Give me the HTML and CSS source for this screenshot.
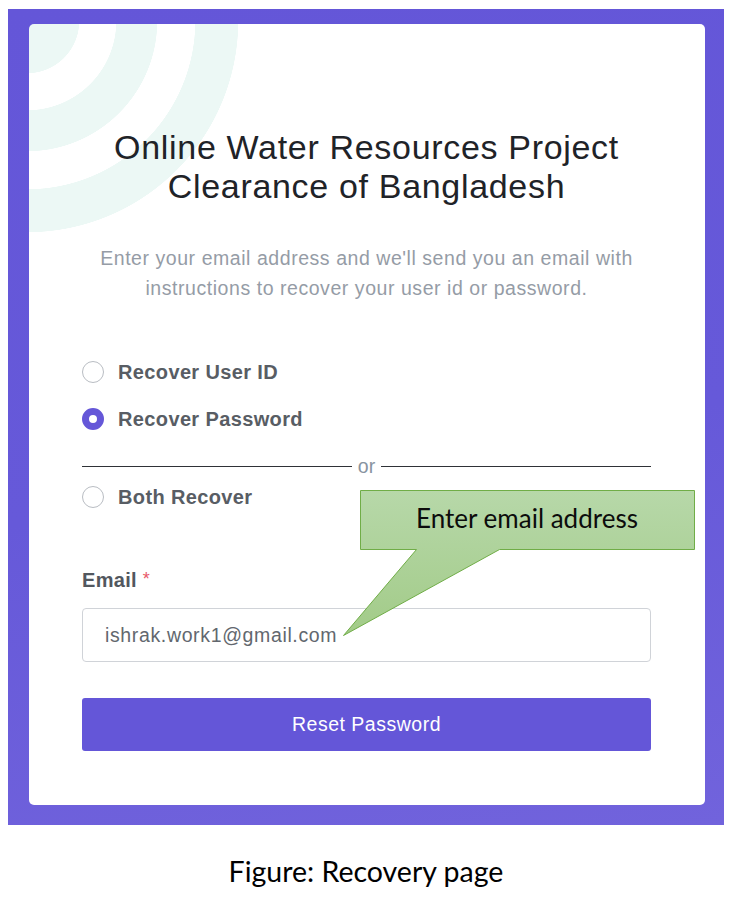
FILE: index.html
```html
<!DOCTYPE html>
<html lang="en">
<head>
<meta charset="utf-8">
<title>Recovery page</title>
<link rel="stylesheet" href="styles.css">
</head>
<body>
<div class="page">
  <div class="frame">
    <div class="card">
      <h1 class="title">Online Water Resources Project<br>Clearance of Bangladesh</h1>
      <p class="lead">Enter your email address and we'll send you an email with<br>instructions to recover your user id or password.</p>
      <div class="options">
        <div class="opt opt-first"><span class="radio"></span><span class="opt-text">Recover User ID</span></div>
        <div class="opt opt-second"><span class="radio radio-on"></span><span class="opt-text">Recover Password</span></div>
        <div class="divider"><span class="rule"></span><span class="or">or</span><span class="rule"></span></div>
        <div class="opt opt-third"><span class="radio"></span><span class="opt-text">Both Recover</span></div>
      </div>
      <div class="field-label">Email <span class="req">*</span></div>
      <div class="input">ishrak.work1@gmail.com</div>
      <div class="btn">Reset Password</div>
      <div class="callout">
        <svg class="callout-shape" width="336" height="148" viewBox="0 0 336 148">
          <defs>
            <linearGradient id="g" x1="0" y1="0" x2="0" y2="1">
              <stop offset="0" stop-color="#b7d8a9"/>
              <stop offset="1" stop-color="#a2cb88"/>
            </linearGradient>
          </defs>
          <path d="M0.5 0.5 H334.5 V59.5 H139.5 L-16.5 145.5 L56.5 59.5 H0.5 Z" fill="url(#g)" stroke="#70ad47" stroke-width="1"/>
        </svg>
        <span class="callout-text">Enter email address</span>
      </div>
    </div>
  </div>
  <p class="caption">Figure: Recovery page</p>
</div>
</body>
</html>
```

FILE: styles.css
```css
* { box-sizing: border-box; }
html, body { margin: 0; padding: 0; background: #ffffff; }
body { font-family: "Liberation Sans", Arial, sans-serif; }

.page { width: 736px; }

.frame {
  margin: 9px 0 0 8px;
  width: 716px;
  padding: 15px 19px 20px 21px;
  background: linear-gradient(170deg, #6456d8 0%, #6659d9 55%, #7163dc 100%);
}

.card {
  position: relative;
  background-color: #ffffff;
  background-image: radial-gradient(circle at -2px -3px,
    #ecf8f5 0 52px, rgba(236,248,245,0) 52.5px 89px,
    #ecf8f5 89.5px 130px, rgba(236,248,245,0) 130.5px 168px,
    #ecf8f5 168.5px 211px, rgba(236,248,245,0) 211.5px);
  border-radius: 5px;
  padding: 104px 54px 54px 53px;
}

.title {
  margin: 0;
  text-align: center;
  font-weight: 400;
  font-size: 34px;
  line-height: 39px;
  letter-spacing: 0.68px;
  color: #1f2328;
}

.lead {
  margin: 37px 0 0;
  text-align: center;
  font-size: 19.5px;
  line-height: 30px;
  letter-spacing: 0.55px;
  color: #959ca6;
}

.options { margin-top: 57px; }

.opt {
  display: flex;
  align-items: center;
  height: 24px;
  gap: 14px;
}
.opt-second { margin-top: 23px; }
.opt-third { margin-top: 9px; }

.radio {
  width: 22px;
  height: 22px;
  border-radius: 50%;
  border: 1.5px solid #b9bdc3;
  background: #ffffff;
  flex: none;
}
.radio-on {
  border: 7.5px solid #6557d8;
  background: #ffffff;
}

.opt-text {
  font-weight: 700;
  font-size: 20px;
  letter-spacing: 0.37px;
  color: #585d64;
}

.divider {
  display: flex;
  align-items: center;
  height: 20px;
  margin-top: 25px;
  gap: 6px;
}
.rule {
  flex: 1;
  height: 1px;
  background: #2f3237;
}
.or {
  font-size: 19.5px;
  line-height: 20px;
  color: #8893a0;
}

.field-label {
  margin-top: 59px;
  font-weight: 700;
  font-size: 20px;
  line-height: 24px;
  letter-spacing: 0.3px;
  color: #52575e;
}
.req { color: #e8596a; font-weight: 400; font-size: 18px; position: relative; top: -2px; }

.input {
  margin-top: 15px;
  height: 54px;
  border: 1px solid #d0d3d8;
  border-radius: 4px;
  padding: 0 0 0 22px;
  display: flex;
  align-items: center;
  font-size: 19.5px;
  letter-spacing: 0.64px;
  color: #62676e;
}

.btn {
  margin-top: 36px;
  height: 53px;
  border-radius: 3px;
  background: #6456d8;
  color: #ffffff;
  display: flex;
  align-items: center;
  justify-content: center;
  font-size: 19.5px;
  letter-spacing: 0.5px;
}

.callout {
  position: absolute;
  left: 331px;
  top: 466px;
  width: 336px;
  height: 60px;
}
.callout-shape {
  position: absolute;
  left: 0;
  top: 0;
  overflow: visible;
}
.callout-text {
  position: relative;
  display: block;
  text-align: center;
  padding-top: 13px;
  padding-right: 2px;
  font-family: Lato, "Open Sans", sans-serif;
  font-size: 26px;
  line-height: 30px;
  color: #0c0c0c;
}

.caption {
  margin: 29px 0 0;
  text-align: center;
  font-family: Lato, "Open Sans", sans-serif;
  font-size: 28.5px;
  line-height: 34px;
  color: #000000;
  padding-right: 4px;
}
```
